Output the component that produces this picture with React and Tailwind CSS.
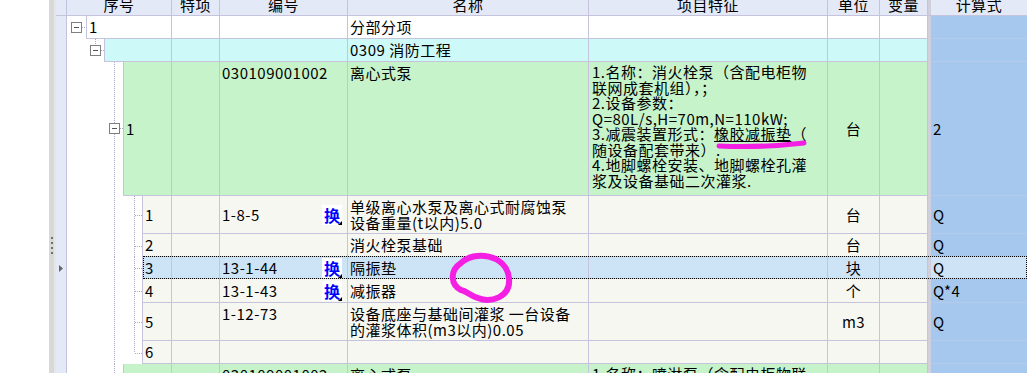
import React from "react";

const LINE = "#a9a8c9";

function Dot(props) {
  return <line stroke={LINE} strokeWidth="1" strokeDasharray="1 1" {...props} />;
}

function Box({ x, y }) {
  return (
    <g>
      <rect x={x + 0.5} y={y + 0.5} width="10" height="10" fill="white" stroke="#7f7f7f" />
      <line x1={x + 3} x2={x + 8} y1={y + 5.5} y2={y + 5.5} stroke="#555" />
    </g>
  );
}

function ChildTree({ h, last }) {
  return (
    <svg width="75" height={h} className="block shrink-0">
      <Dot x1="47.5" x2="47.5" y1="0" y2={h} />
      <Dot x1="67.5" x2="67.5" y1="0" y2={last ? h / 2 : h} />
      <Dot x1="68" x2="75" y1={Math.round(h / 2) + 0.5} y2={Math.round(h / 2) + 0.5} />
    </svg>
  );
}

function Tag() {
  return (
    <span className="relative flex h-[20px] w-[20px] shrink-0 items-center justify-center bg-white text-[16px] font-bold leading-none tracking-normal text-[#0000ff]">
      换
      <svg className="absolute bottom-0 right-0" width="4" height="4">
        <path d="M4 0 L4 4 L0 4 Z" fill="#000" />
      </svg>
    </span>
  );
}

function Row({ h, tree, bg, seq, code, codeTop, tag, name, nameTop, feat, unit, calc, calcBg, arrow, selected }) {
  const cell = "border-r border-b border-[#c6c4dd]";
  return (
    <div className={`relative flex shrink-0 ${h}`}>
      <div className="flex w-[11px] shrink-0 items-center justify-center border-r border-[#c3c2dc] bg-[#e3e9f6]">
        {arrow && (
          <svg width="4" height="7">
            <path d="M0 0 L4 3.5 L0 7 Z" fill="#666" />
          </svg>
        )}
      </div>
      <div className="flex w-[105px] shrink-0">
        {tree}
        <div className={`flex flex-1 items-center border-l border-r border-b border-[#c6c4dd] px-[2px] ${bg}`}>{seq}</div>
      </div>
      <div className={`w-[48px] shrink-0 ${cell} ${bg}`} />
      <div className={`flex w-[128px] shrink-0 justify-between pl-[2px] pr-[5px] ${cell} ${bg} ${codeTop ? "items-start pt-[3px]" : "items-center"}`}>
        <span>{code}</span>
        {tag && <Tag />}
      </div>
      <div className={`flex w-[241px] shrink-0 px-[2px] whitespace-nowrap ${cell} ${bg} ${nameTop ? "items-start pt-[3px]" : "items-center"}`}>
        <div>{name}</div>
      </div>
      <div className={`w-[239px] shrink-0 overflow-hidden px-[3px] pt-[2px] whitespace-nowrap ${cell} ${bg}`}>{feat}</div>
      <div className={`flex w-[52px] shrink-0 items-center justify-center ${cell} ${bg}`}>{unit}</div>
      <div className={`w-[48px] shrink-0 ${cell} ${bg}`} />
      <div className="w-[3px] shrink-0 bg-[#d0cfdc]" />
      <div className={`flex flex-1 items-center border-b border-[#b6cbea] pl-[2px] ${calcBg || "bg-[#a6c8ef]"}`}>{calc}</div>
      {selected && <div className="pointer-events-none absolute -top-px bottom-0 left-[87px] right-0 border border-dotted border-black" />}
    </div>
  );
}

function Header() {
  const c = "flex shrink-0 items-start justify-center overflow-hidden border-r border-[#c6c4dd]";
  return (
    <div className="flex h-[16px] shrink-0 border-b border-[#c6c4dd] bg-[#e3e9f6]">
      <div className="w-[11px] shrink-0 border-r border-[#c3c2dc]" />
      {[
        ["序号", "w-[105px]"],
        ["特项", "w-[48px]"],
        ["编号", "w-[128px]"],
        ["名称", "w-[241px]"],
        ["项目特征", "w-[239px]"],
        ["单位", "w-[52px]"],
        ["变量", "w-[48px]"],
      ].map(([t, w]) => (
        <div key={t} className={`${c} ${w}`}>
          <span className="-mt-[3px]">{t}</span>
        </div>
      ))}
      <div className="w-[3px] shrink-0 bg-[#d0cfdc]" />
      <div className="flex flex-1 items-start justify-center overflow-hidden">
        <span className="-mt-[3px]">计算式</span>
      </div>
    </div>
  );
}

const child = "bg-[#f7f7f2]";
const green = "bg-[#c6f3ca]";
const sel = "bg-[#cde4f7]";

export default function App() {
  return (
    <div className="relative flex h-[373px] w-[1027px] overflow-hidden bg-white font-['Noto_Sans_CJK_SC',sans-serif] text-[15px] leading-[15.5px] tracking-[0.5px] text-black">
      <div className="w-[49px] shrink-0" />
      <div className="flex w-[7px] shrink-0 flex-col items-center gap-[3px] border-r-2 border-[#e6e6e6] bg-[#d8d8d8] pt-[237px]">
        {[0, 1, 2, 3].map((i) => (
          <span key={i} className="h-[2px] w-[2px] bg-[#6f6f6f]" />
        ))}
      </div>
      <div className="flex min-w-0 flex-1 flex-col">
        <Header />
        <Row
          h="h-[23px]"
          bg="bg-white"
          tree={
            <svg width="19" height="23" className="block shrink-0">
              <Box x={4} y={6} />
              <Dot x1="15" x2="19" y1="11.5" y2="11.5" />
            </svg>
          }
          seq="1"
          name="分部分项"
        />
        <Row
          h="h-[23px]"
          bg="bg-[#cdf9f9]"
          tree={
            <svg width="37" height="23" className="block shrink-0">
              <Dot x1="28.5" x2="28.5" y1="0" y2="6" />
              <Box x={23} y={6} />
              <Dot x1="34" x2="37" y1="11.5" y2="11.5" />
            </svg>
          }
          name="0309 消防工程"
        />
        <Row
          h="h-[134px]"
          bg={green}
          tree={
            <svg width="56" height="134" className="block shrink-0">
              <Dot x1="47.5" x2="47.5" y1="0" y2="61" />
              <Box x={42} y={61} />
              <Dot x1="53" x2="56" y1="66.5" y2="66.5" />
              <Dot x1="47.5" x2="47.5" y1="72" y2="134" />
            </svg>
          }
          seq="1"
          code="030109001002"
          codeTop
          name="离心式泵"
          nameTop
          feat={
            <>
              1.名称：消火栓泵（含配电柜物
              <br />
              联网成套机组），；
              <br />
              2.设备参数：
              <br />
              Q=80L/s,H=70m,N=110kW;
              <br />
              3.减震装置形式：<span className="underline decoration-black">橡胶减振垫</span>（
              <br />
              随设备配套带来）.
              <br />
              4.地脚螺栓安装、地脚螺栓孔灌
              <br />
              浆及设备基础二次灌浆.
            </>
          }
          unit="台"
          calc="2"
        />
        <Row
          h="h-[38px]"
          bg={child}
          tree={<ChildTree h={38} />}
          seq="1"
          code="1-8-5"
          tag
          name={
            <>
              单级离心水泵及离心式耐腐蚀泵
              <br />
              设备重量(t以内)5.0
            </>
          }
          nameTop
          unit="台"
          calc="Q"
        />
        <Row h="h-[23px]" bg={child} tree={<ChildTree h={23} />} seq="2" name="消火栓泵基础" unit="台" calc="Q" />
        <Row
          h="h-[22px]"
          bg={sel}
          tree={<ChildTree h={22} />}
          seq="3"
          code="13-1-44"
          tag
          name="隔振垫"
          unit="块"
          calc="Q"
          calcBg="bg-[#cfe3f7]"
          arrow
          selected
        />
        <Row h="h-[24px]" bg={child} tree={<ChildTree h={24} />} seq="4" code="13-1-43" tag name="减振器" unit="个" calc="Q*4" />
        <Row
          h="h-[38px]"
          bg={child}
          tree={<ChildTree h={38} />}
          seq="5"
          code="1-12-73"
          codeTop
          name={
            <>
              设备底座与基础间灌浆 一台设备
              <br />
              的灌浆体积(m3以内)0.05
            </>
          }
          nameTop
          unit="m3"
          calc="Q"
        />
        <Row h="h-[23px]" bg={child} tree={<ChildTree h={23} last />} seq="6" />
        <Row
          h="h-[60px]"
          bg={green}
          tree={
            <svg width="56" height="60" className="block shrink-0">
              <Dot x1="47.5" x2="47.5" y1="0" y2="60" />
            </svg>
          }
          code="030109001002"
          codeTop
          name="离心式泵"
          nameTop
          feat="1.名称：喷淋泵（含配电柜物联"
        />
      </div>
      <svg className="pointer-events-none absolute left-0 top-0" width="1027" height="373">
        <path d="M719 146 Q 760 148 804 143" fill="none" stroke="#f51ee3" strokeWidth="5" strokeLinecap="round" />
        <path
          d="M461 263 C 474 250, 506 254, 509 278 C 511 298, 490 303, 478 298 C 470 296, 467 291, 461 290 C 451 285, 449 271, 461 263 Z"
          fill="none"
          stroke="#f51ee3"
          strokeWidth="6"
          strokeLinejoin="round"
        />
      </svg>
    </div>
  );
}
